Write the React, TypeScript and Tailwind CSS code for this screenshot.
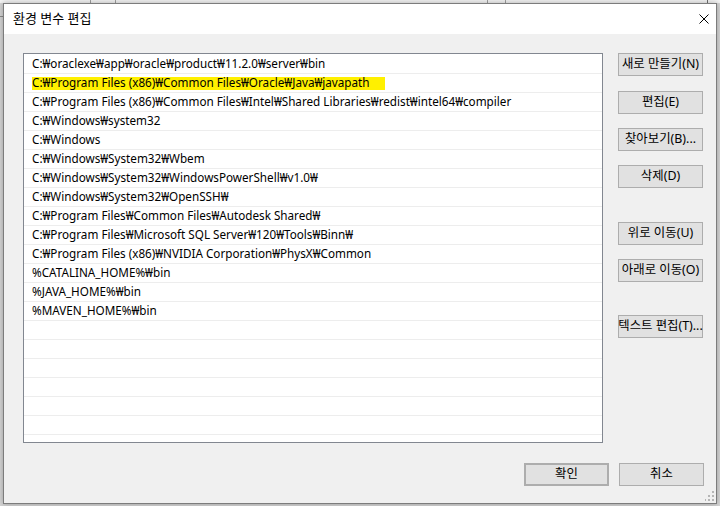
import React from "react";

const paths = [
  "C:₩oraclexe₩app₩oracle₩product₩11.2.0₩server₩bin",
  "C:₩Program Files (x86)₩Common Files₩Oracle₩Java₩javapath",
  "C:₩Program Files (x86)₩Common Files₩Intel₩Shared Libraries₩redist₩intel64₩compiler",
  "C:₩Windows₩system32",
  "C:₩Windows",
  "C:₩Windows₩System32₩Wbem",
  "C:₩Windows₩System32₩WindowsPowerShell₩v1.0₩",
  "C:₩Windows₩System32₩OpenSSH₩",
  "C:₩Program Files₩Common Files₩Autodesk Shared₩",
  "C:₩Program Files₩Microsoft SQL Server₩120₩Tools₩Binn₩",
  "C:₩Program Files (x86)₩NVIDIA Corporation₩PhysX₩Common",
  "%CATALINA_HOME%₩bin",
  "%JAVA_HOME%₩bin",
  "%MAVEN_HOME%₩bin",
];

const rows = [...paths, ...Array(7).fill("")];

function Btn({ label, className = "" }: { label: string; className?: string }) {
  return (
    <div
      className={`h-[23px] w-[85px] flex items-center justify-center whitespace-nowrap border border-[#adadad] bg-[#e1e1e1] text-[12.4px] text-black ${className}`}
    >
      {label}
    </div>
  );
}

export default function App() {
  return (
    <div
      className="relative w-[720px] h-[506px] overflow-hidden bg-[#d6d6d6]"
      style={{ fontFamily: '"Noto Sans", "Noto Sans CJK KR", sans-serif' }}
    >
      {/* window behind the dialog */}
      <div className="absolute left-0 top-0 w-full h-[3px] bg-[#f4f4f4] overflow-hidden">
        <div className="absolute left-[90px] top-0 w-px h-[3px] bg-[#a0a0a0]" />
        <div className="absolute left-[115px] top-0 w-px h-[3px] bg-[#a0a0a0]" />
        <div className="absolute left-[487px] top-0 w-px h-[3px] bg-[#a0a0a0]" />
        <div className="absolute left-[505px] top-0 w-px h-[3px] bg-[#a0a0a0]" />
        <div className="absolute left-[707px] top-0 w-px h-[3px] bg-[#707070]" />
        <span className="absolute left-[124px] top-[-13px] text-[12px] leading-[16px] text-[#333]">OneDrive</span>
        <span className="absolute left-[241px] top-[-13px] text-[12px] leading-[16px] text-[#333]">C:₩Users₩ZEN₩OneDrive</span>
      </div>
      <div className="absolute left-0 top-[16px] w-[3px] h-px bg-[#8a8a8a]" />

      {/* dialog */}
      <div className="absolute left-[3px] top-[3px] w-[714px] h-[501px] flex flex-col border border-[#7c7c7c] bg-[#f0f0f0] shadow-[0_0_6px_rgba(0,0,0,0.3)]">
        <div className="h-[30px] shrink-0 flex items-center justify-between bg-white pl-[9px] pr-[7px]">
          <span className="text-[13px] text-black">환경 변수 편집</span>
          <svg width="10" height="10" viewBox="0 0 10 10" className="mt-[-1px]">
            <path d="M0.5 0.5 L9.5 9.5 M9.5 0.5 L0.5 9.5" stroke="#000" strokeWidth="1" fill="none" />
          </svg>
        </div>

        <div className="flex-1 flex flex-col pl-[19px] pr-[12px] pt-[19px]">
          <div className="flex">
            <div className="w-[580px] h-[390px] border border-[#828790] bg-white pt-px overflow-hidden">
              {rows.map((p, i) => (
                <div
                  key={i}
                  className="h-[19px] flex items-center border-b border-[#ededed] pl-2 text-[11.7px] text-black whitespace-nowrap"
                >
                  {i === 1 ? (
                    <span className="h-[13px] flex items-center bg-[#fff000] pr-[15px]">{p}</span>
                  ) : (
                    p
                  )}
                </div>
              ))}
            </div>
            <div className="ml-[15px] flex flex-col">
              <Btn label="새로 만들기(N)" className="mt-0" />
              <Btn label="편집(E)" className="mt-[15px]" />
              <Btn label="찾아보기(B)..." className="mt-[14px]" />
              <Btn label="삭제(D)" className="mt-[14px]" />
              <Btn label="위로 이동(U)" className="mt-[34px]" />
              <Btn label="아래로 이동(O)" className="mt-[14px]" />
              <Btn label="텍스트 편집(T)..." className="mt-[33px]" />
            </div>
          </div>
          <div className="flex justify-end gap-[10px] mt-[20px]">
            <Btn label="확인" className="border-2 border-[#0078d7]" />
            <Btn label="취소" />
          </div>
        </div>

        <svg width="10" height="10" viewBox="0 0 10 10" className="absolute right-[1px] bottom-[2px]">
          <rect x="7" y="0" width="2" height="2" fill="#b5b5b5" />
          <rect x="3" y="4" width="2" height="2" fill="#b5b5b5" />
          <rect x="7" y="4" width="2" height="2" fill="#b5b5b5" />
          <rect x="-1" y="8" width="2" height="2" fill="#b5b5b5" />
          <rect x="3" y="8" width="2" height="2" fill="#b5b5b5" />
          <rect x="7" y="8" width="2" height="2" fill="#b5b5b5" />
        </svg>
      </div>
    </div>
  );
}
